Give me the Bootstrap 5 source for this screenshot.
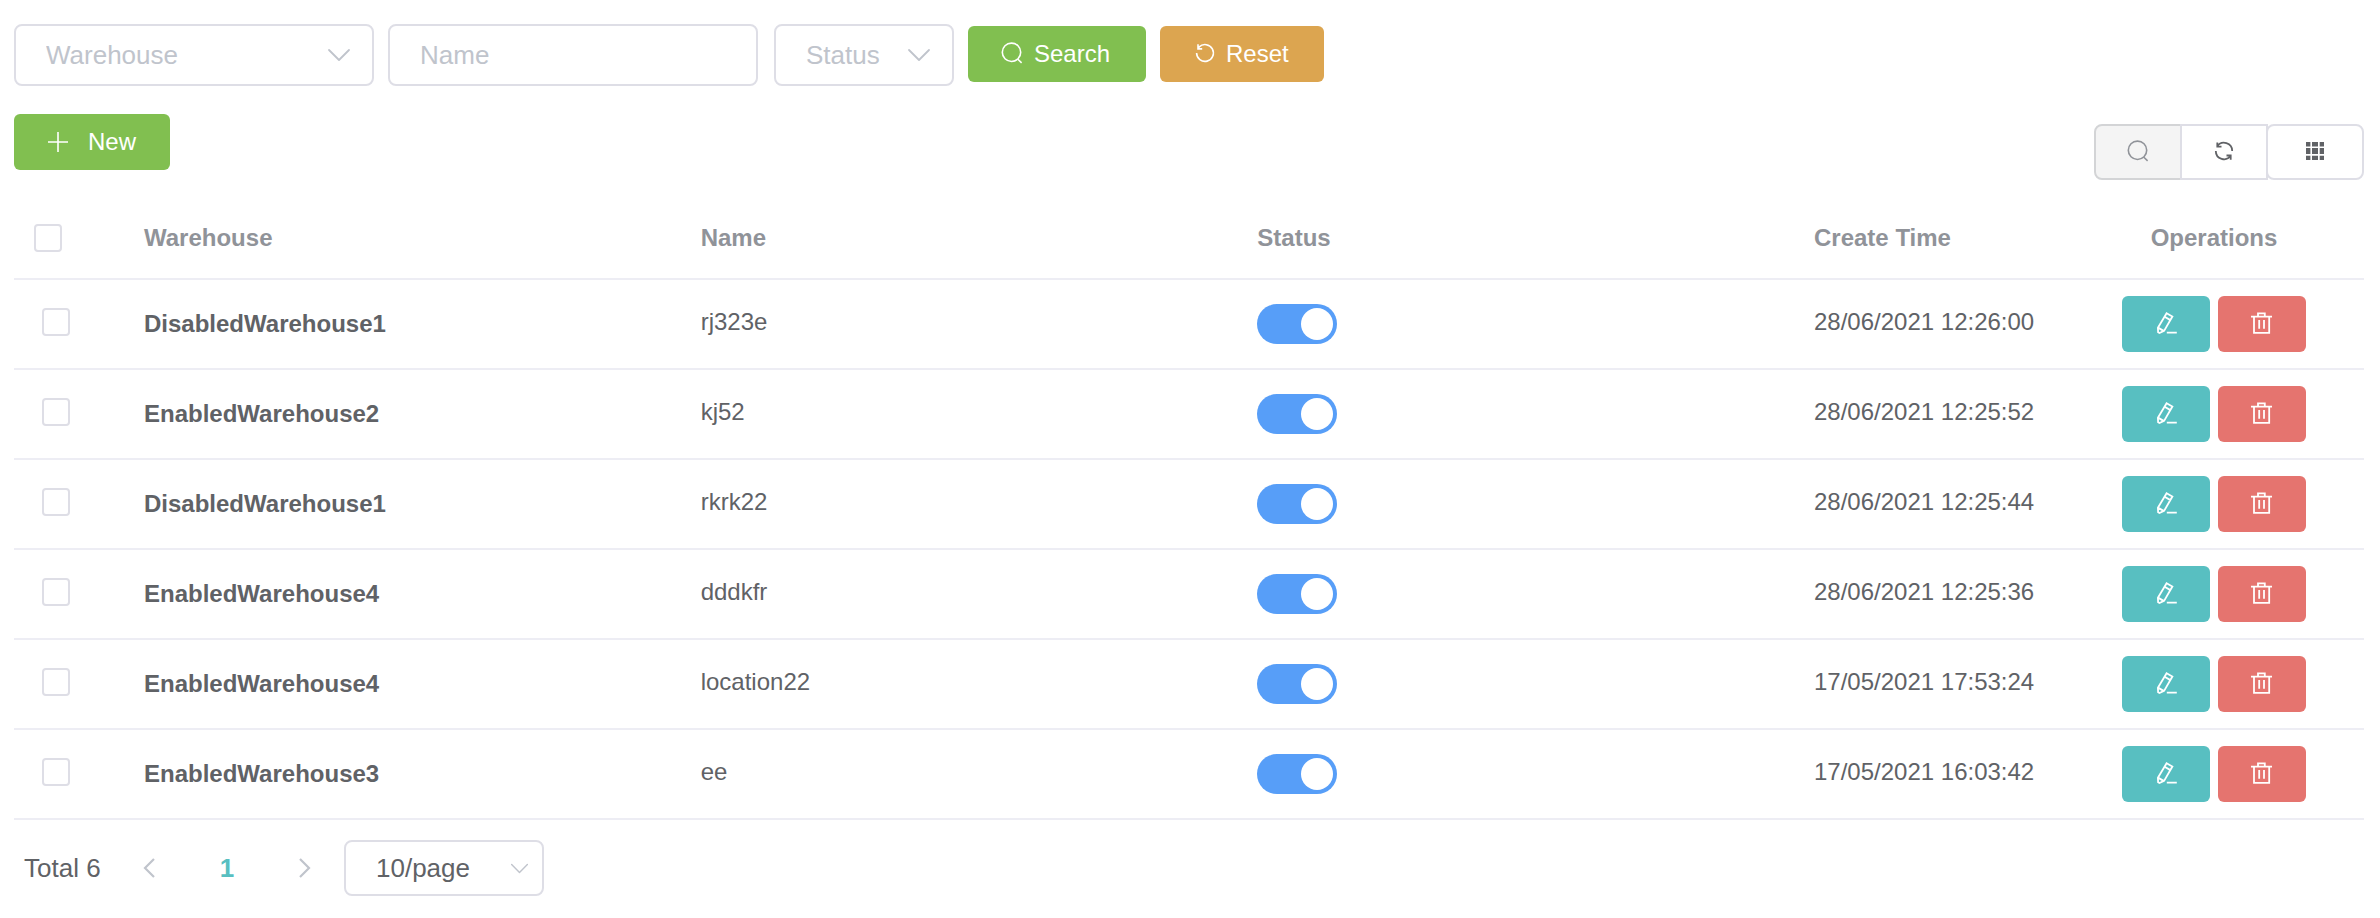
<!DOCTYPE html>
<html lang="en">
<head>
<meta charset="utf-8">
<meta name="viewport" content="width=device-width, initial-scale=1">
<title>Locations</title>
<link rel="stylesheet" href="https://cdn.jsdelivr.net/npm/bootstrap@5.3.0/dist/css/bootstrap.min.css">
<style>
  body { font-family: "Liberation Sans", Arial, sans-serif; font-size: 24px; color: #606266; padding: 24px 16px 16px 14px; }
  svg { display: block; flex: none; fill: none; stroke: currentColor; }
  .icon { width: 24px; height: 24px; stroke-width: 1.6; }
  .field { height: 62px; border: 2px solid #dedee6; border-radius: 8px; padding: 0 30px; font-size: 26px; line-height: 38px; color: #606266; }
  .field::placeholder, .field.unset { color: #c0c4cc; opacity: 1; }
  select.field { background-image: url("data:image/svg+xml,%3Csvg xmlns='http://www.w3.org/2000/svg' viewBox='0 0 24 14'%3E%3Cpath d='M2 2l10 10L22 2' fill='none' stroke='%23c0c4cc' stroke-width='1.8' stroke-linecap='round' stroke-linejoin='round'/%3E%3C/svg%3E"); background-size: 24px 14px; background-position: right 21px center; }
  .f-warehouse { width: 360px; }
  .f-name { width: 370px; margin-right: 2px; }
  .f-status { width: 180px; }
  select.f-size { width: 200px; height: 56px; background-size: 19px 11px; background-position: right 13px center; }
  .action { height: 56px; padding: 0 32px; border: 0; border-radius: 6px; font-size: 24px; color: #fff; display: flex; align-items: center; gap: 10px; }
  .action:hover { color: #fff; opacity: .9; }
  .green { background: #81bf50; }
  .orange { background: #dca550; }
  .w-search { width: 178px; }
  .w-reset { width: 164px; }
  .w-new { width: 156px; gap: 18px; }
  .filters { gap: 14px; margin-bottom: 28px; }
  .filters .action { margin-top: 2px; }
  .toolbar { margin-bottom: 18px; }
  .tools { margin-top: 10px; }
  .tools .btn { height: 56px; width: 88px; flex: none; border: 2px solid #dedee6; border-radius: 8px; color: #606266; display: flex; align-items: center; justify-content: center; padding: 0; }
  .btn-group.tools > .btn.joined:not(:first-child) { margin-left: -2px; }
  .tools .btn:first-child { background: #f4f4f4; border-color: #d3d4d6; color: #909399; }
  .btn-group.tools > .btn.joined:nth-child(2) { background: #fff; z-index: 1; border-radius: 0; }
  .btn-group.tools > .btn.joined:last-child { width: 98px; border-radius: 8px; }
  .grid-table { table-layout: fixed; border-collapse: separate; border-spacing: 0; margin: 0; color: #606266; border-color: #ededf4; }
  .grid-table > :not(caption) > * > * { border-bottom: 2px solid #ededf4; padding: 0 20px; height: 90px; vertical-align: middle; color: inherit; line-height: 28px; background: none; }
  .grid-table > thead > tr > th { height: 82px; color: #909399; }
  .grid-table > tbody > tr > .raised { padding-bottom: 4px; }
  .grid-table > tbody > tr > .pick { padding-left: 28px; }
  .c-pick { width: 110px; } .c-time { width: 270px; } .c-ops { width: 300px; }
  .form-check-input.tick { display: block; width: 28px; height: 28px; margin: 0; border: 2px solid #dedee6; border-radius: 4px; }
  .form-check-input.toggle { display: block; float: none; width: 80px; height: 40px; margin: 0; border: 0; border-radius: 20px; background-color: #579ef8; background-size: 32px 32px; background-position: right 4px center; background-repeat: no-repeat;
    background-image: url("data:image/svg+xml,%3Csvg xmlns='http://www.w3.org/2000/svg' viewBox='0 0 32 32'%3E%3Ccircle cx='16' cy='16' r='16' fill='%23fff'/%3E%3C/svg%3E"); }
  .form-check-input.toggle:not(:checked) { background-color: #dcdfe6; background-position: left 4px center; }
  .op { width: 88px; height: 56px; border: 0; border-radius: 6px; color: #fff; display: flex; align-items: center; justify-content: center; padding: 0; }
  .op-edit { background: #58bfc1; }
  .op-delete { background: #e5746f; }
  .pager { font-size: 26px; padding: 20px 10px 0; }
  .pager .step { width: 48px; height: 56px; border: 0; background: none; color: #c0c4cc; display: flex; align-items: center; justify-content: center; padding: 0; }
  .pager .current { color: #58bfc1; font-weight: 700; text-decoration: none; width: 108px; text-align: center; }
  .total { width: 101px; white-space: nowrap; }
  .f-size-wrap { margin-left: 15px; }
</style>
</head>
<body>
<svg class="d-none" aria-hidden="true">
  <symbol id="i-search" viewBox="0 0 24 24"><circle cx="11.5" cy="10.3" r="9.2"/><path d="M17.6 17l4 3.8"/></symbol>
  <symbol id="i-reset" viewBox="0 0 24 24"><path d="M4.6 11a8.4 8.4 0 1 0 2.6-6.1L6 6.8M6 2.3v4.6h4.2"/></symbol>
  <symbol id="i-plus" viewBox="0 0 24 24"><path d="M12 2v20M2 12h20"/></symbol>
  <symbol id="i-refresh" viewBox="0 0 24 24" stroke-width="1.8"><path d="M5.2 6.4A8.2 8.2 0 0 1 20.2 11M3.8 11A8.2 8.2 0 0 0 18.8 15.6M5.3 2.4v4.2h4.2M14.5 15.5h4.2v4.2"/></symbol>
  <symbol id="i-grid" viewBox="0 0 24 24"><path fill="currentColor" stroke="none" d="M3 2h4.4v4.4H3zM9 2h6v4.4H9zM16.7 2H21v4.4h-4.3zM3 8h4.4v6H3zM9 8h6v6H9zM16.7 8H21v6h-4.3zM3 15.7h4.4V20H3zM9 15.7h6V20H9zM16.7 15.7H21V20h-4.3z"/></symbol>
  <symbol id="i-edit" viewBox="0 0 24 24" stroke-width="1.8"><path d="M12.6 1.2l5.8 3.3-8.3 14.4-4.6 2.2-1.4-.8-.2-4.6zM10.6 4.8l5.8 3.3M4 15.6l6 3.5M12.8 20.6h10"/></symbol>
  <symbol id="i-delete" viewBox="0 0 24 24" stroke-width="1.8"><path d="M1 4.6h21M4 4.6v16.2h15.2V4.6M8 4.4V1.4h6.8v3M9.2 8v8.8M14 8v8.8"/></symbol>
</svg>

<form class="filters d-flex flex-wrap align-items-start" onsubmit="return false">
  <select class="form-select field unset f-warehouse" aria-label="Warehouse"><option>Warehouse</option></select>
  <input class="form-control field f-name" type="text" placeholder="Name" aria-label="Name">
  <select class="form-select field unset f-status" aria-label="Status"><option>Status</option></select>
  <button class="btn action green w-search" type="submit"><svg class="icon"><use href="#i-search"/></svg>Search</button>
  <button class="btn action orange w-reset" type="reset"><svg class="icon"><use href="#i-reset"/></svg>Reset</button>
</form>

<div class="toolbar d-flex justify-content-between align-items-start">
  <button class="btn action green w-new" type="button"><svg class="icon"><use href="#i-plus"/></svg>New</button>
  <div class="tools btn-group" role="group" aria-label="Table tools">
    <button class="btn joined" type="button" aria-label="Toggle search"><svg class="icon"><use href="#i-search"/></svg></button>
    <button class="btn joined" type="button" aria-label="Refresh"><svg class="icon"><use href="#i-refresh"/></svg></button>
    <button class="btn joined" type="button" aria-label="Columns"><svg class="icon"><use href="#i-grid"/></svg></button>
  </div>
</div>

<table class="table grid-table">
  <thead>
    <tr>
      <th class="c-pick"><input class="form-check-input tick" type="checkbox" aria-label="Select all"></th>
      <th>Warehouse</th><th>Name</th><th>Status</th>
      <th class="c-time">Create Time</th><th class="c-ops text-center">Operations</th>
    </tr>
  </thead>
  <tbody id="rows"></tbody>
</table>

<nav class="pager d-flex align-items-center" aria-label="Pagination">
  <span class="total">Total 6</span>
  <button class="step" type="button" aria-label="Previous page"><svg width="14" height="22" viewBox="0 0 14 22" stroke-width="2.2"><path d="M12 2L3 11l9 9"/></svg></button>
  <a class="current" href="#" aria-current="page">1</a>
  <button class="step" type="button" aria-label="Next page"><svg width="14" height="22" viewBox="0 0 14 22" stroke-width="2.2"><path d="M2 2l9 9-9 9"/></svg></button>
  <div class="f-size-wrap"><select class="form-select field f-size" aria-label="Rows per page"><option>10/page</option></select></div>
</nav>

<script src="https://cdn.jsdelivr.net/npm/bootstrap@5.3.0/dist/js/bootstrap.bundle.min.js"></script>
<script>
  const rows = [
    ["DisabledWarehouse1", "rj323e", "28/06/2021 12:26:00"],
    ["EnabledWarehouse2", "kj52", "28/06/2021 12:25:52"],
    ["DisabledWarehouse1", "rkrk22", "28/06/2021 12:25:44"],
    ["EnabledWarehouse4", "dddkfr", "28/06/2021 12:25:36"],
    ["EnabledWarehouse4", "location22", "17/05/2021 17:53:24"],
    ["EnabledWarehouse3", "ee", "17/05/2021 16:03:42"]
  ];
  document.getElementById("rows").innerHTML = rows.map(([warehouse, name, time]) => `
    <tr>
      <td class="raised pick"><input class="form-check-input tick" type="checkbox" aria-label="Select ${name}"></td>
      <td class="fw-bold">${warehouse}</td>
      <td class="raised">${name}</td>
      <td><input class="form-check-input toggle" type="checkbox" role="switch" checked aria-label="Status of ${name}"></td>
      <td class="raised text-nowrap">${time}</td>
      <td><div class="d-flex justify-content-center gap-2">
        <button class="btn op op-edit" type="button" aria-label="Edit ${name}"><svg class="icon"><use href="#i-edit"/></svg></button>
        <button class="btn op op-delete" type="button" aria-label="Delete ${name}"><svg class="icon"><use href="#i-delete"/></svg></button>
      </div></td>
    </tr>`).join("");
</script>
</body>
</html>
